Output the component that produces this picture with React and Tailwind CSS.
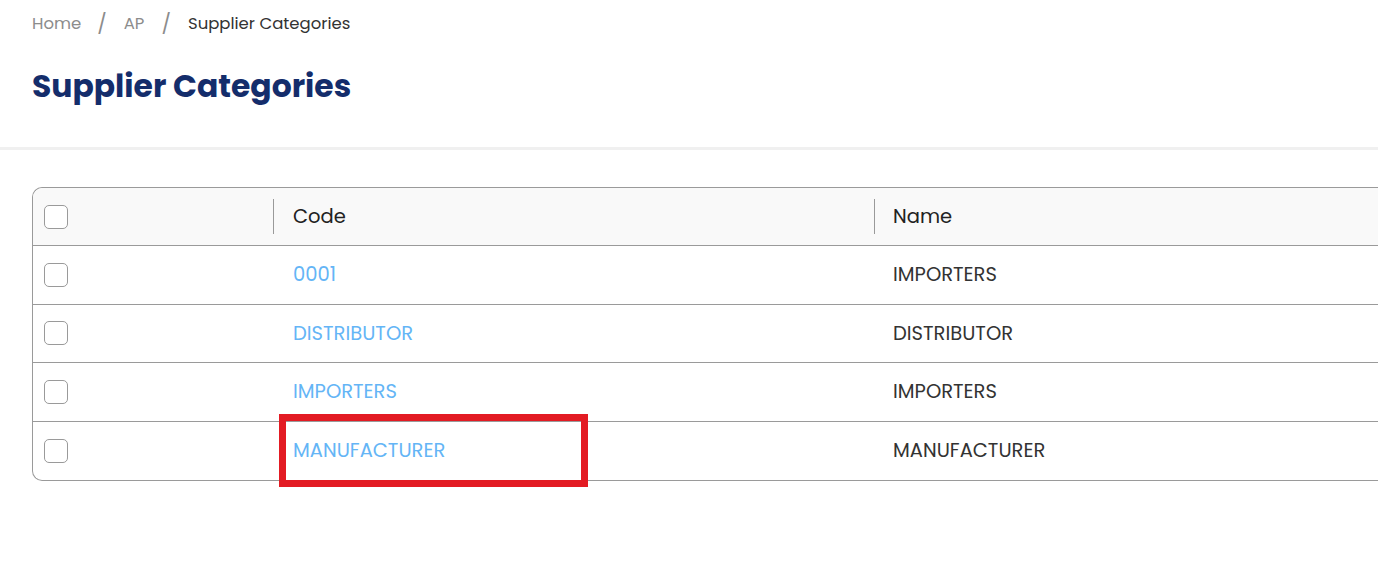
import React from "react";

const rows = [
  { code: "0001", name: "IMPORTERS" },
  { code: "DISTRIBUTOR", name: "DISTRIBUTOR" },
  { code: "IMPORTERS", name: "IMPORTERS" },
  { code: "MANUFACTURER", name: "MANUFACTURER", marked: true },
];

function Box() {
  return <div className="w-6 h-6 rounded-[5px] border border-[#9a9a9a] bg-white" />;
}

export default function App() {
  return (
    <div
      className="w-[1378px] h-[574px] overflow-hidden bg-white text-[#333]"
      style={{ fontFamily: "Poppins, 'Noto Sans', 'Open Sans', sans-serif" }}
    >
      <div className="h-[147px] px-8 pt-[12px]">
        <div className="flex items-center text-[16.5px] leading-6">
          <span className="text-[#8c8c8c]">Home</span>
          <span className="text-[#8c8c8c] text-[20px] ml-[16px] mr-[17px]">/</span>
          <span className="text-[#8c8c8c]">AP</span>
          <span className="text-[#8c8c8c] text-[20px] ml-[17px] mr-[17px]">/</span>
          <span className="text-[#333]">Supplier Categories</span>
        </div>
        <h1 className="mt-[30px] text-[31.4px] leading-[40px] font-bold text-[#142d6b]">
          Supplier Categories
        </h1>
      </div>
      <div className="h-[3px] bg-[#f0f0f0]" />
      <div className="pl-8 pt-[37px]">
        <div className="w-[1400px] border border-r-0 border-[#9a9a9a] rounded-l-[10px]">
          <div className="flex h-[58px] bg-[#f9f9f9] rounded-tl-[10px] items-center border-b border-[#9a9a9a]">
            <div className="w-[240px] pl-[11px] flex items-center"><Box /></div>
            <div className="w-[601px] flex items-center h-full">
              <div className="w-px h-[35px] bg-[#9a9a9a]" />
              <span className="ml-[19px] text-[19.5px] text-[#222]">Code</span>
            </div>
            <div className="flex items-center h-full">
              <div className="w-px h-[35px] bg-[#9a9a9a]" />
              <span className="ml-[18px] text-[19.5px] text-[#222]">Name</span>
            </div>
          </div>
          {rows.map((r, i) => (
            <div
              key={i}
              className={`flex h-[58.6px] items-center ${i < rows.length - 1 ? "border-b border-[#9a9a9a]" : ""}`}
            >
              <div className="w-[240px] pl-[11px] flex items-center"><Box /></div>
              <div className="w-[601px] pl-[20px] text-[19.5px] text-[#64b5f6]">
                {r.marked ? (
                  <span className="relative">
                    {r.code}
                    <span className="absolute -left-[14px] -top-[23px] w-[309px] h-[73px] border-[7px] border-[#e31b23]" />
                  </span>
                ) : (
                  r.code
                )}
              </div>
              <div className="pl-[19px] text-[19.5px] text-[#333]">{r.name}</div>
            </div>
          ))}
        </div>
      </div>
    </div>
  );
}
